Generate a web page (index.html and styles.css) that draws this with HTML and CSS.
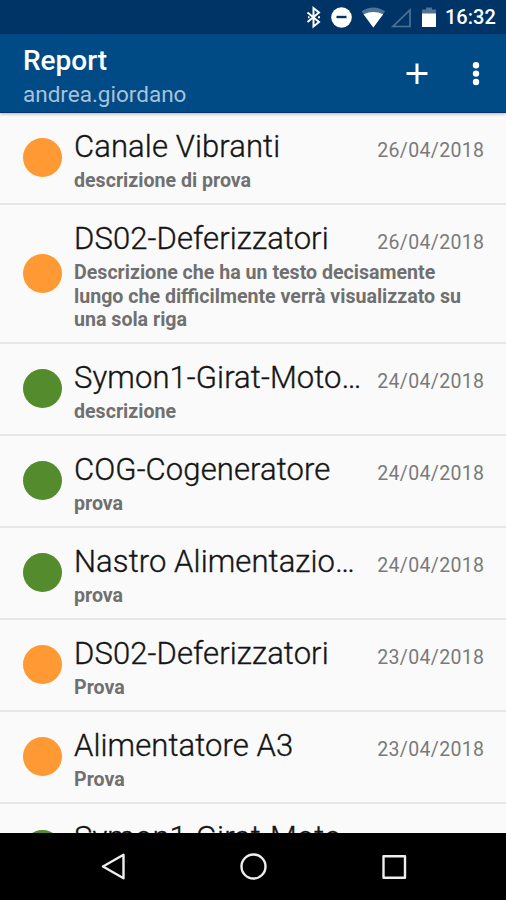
FILE: index.html
```html
<!DOCTYPE html>
<html lang="it">
<head>
<meta charset="utf-8">
<title>Report</title>
<link rel="stylesheet" href="styles.css">
</head>
<body>
<div class="screen">
  <div class="status">
    <svg class="status-icons" width="150" height="34" viewBox="290 0 150 34">
      <path d="M307.500 12.500l11.500 9.500-5.500 4.500V8l5.500 4.500-11.500 9.500" fill="none" stroke="#fff" stroke-width="2"/>
      <path d="M308 17.300h1.500M318 17.300h2" stroke="#fff" stroke-width="2"/>
      <circle cx="341.500" cy="17.500" r="10.300" fill="#fff"/>
      <path d="M336.500 17h10" stroke="#003366" stroke-width="2.400"/>
      <path d="M361.500 11.300Q373.300 3.500 385.200 11.300L373.300 27.500z" fill="#4f7397"/>
      <path d="M363.500 14.300Q373.300 9.500 383.200 14.300L373.300 27.500z" fill="#fff"/>
      <path d="M393 26.500h17V10z" fill="none" stroke="#4f7397" stroke-width="1.700"/>
      <path d="M422 9.500h4V7.500h6v2h4v5h-14z" fill="#4f7397"/>
      <path d="M422 13.500h14V27h-14z" fill="#fff"/>
    </svg>
    <span class="clock">16:32</span>
  </div>
  <header class="bar">
    <div class="heading">
      <h1>Report</h1>
      <p>andrea.giordano</p>
    </div>
    <svg class="actions" width="106" height="78" viewBox="400 34 106 78">
      <path d="M406.500 73.500h21M417 63.500v20.500" stroke="#fff" stroke-width="3"/>
      <g fill="#fff"><circle cx="476" cy="65.300" r="3.200"/><circle cx="476" cy="73.600" r="3.200"/><circle cx="476" cy="82" r="3.200"/></g>
    </svg>
  </header>
  <main class="list">
    <article class="row"><i class="dot orange"></i><div class="body"><div class="line"><h2>Canale Vibranti</h2><time>26/04/2018</time></div><p>descrizione di prova</p></div></article>
    <article class="row"><i class="dot orange"></i><div class="body"><div class="line"><h2>DS02-Deferizzatori</h2><time>26/04/2018</time></div><p>Descrizione che ha un testo decisamente lungo che difficilmente verrà visualizzato su una sola riga</p></div></article>
    <article class="row"><i class="dot green"></i><div class="body"><div class="line"><h2>Symon1-Girat-Moto…</h2><time>24/04/2018</time></div><p>descrizione</p></div></article>
    <article class="row"><i class="dot green"></i><div class="body"><div class="line"><h2>COG-Cogeneratore</h2><time>24/04/2018</time></div><p>prova</p></div></article>
    <article class="row"><i class="dot green"></i><div class="body"><div class="line"><h2>Nastro Alimentazio…</h2><time>24/04/2018</time></div><p>prova</p></div></article>
    <article class="row"><i class="dot orange"></i><div class="body"><div class="line"><h2>DS02-Deferizzatori</h2><time>23/04/2018</time></div><p>Prova</p></div></article>
    <article class="row"><i class="dot orange"></i><div class="body"><div class="line"><h2>Alimentatore A3</h2><time>23/04/2018</time></div><p>Prova</p></div></article>
    <article class="row"><i class="dot green"></i><div class="body"><div class="line"><h2>Symon1-Girat-Moto</h2></div><p>&nbsp;</p></div></article>
  </main>
  <nav class="nav">
    <svg width="506" height="67" viewBox="0 833 506 67" fill="none" stroke="#eee" stroke-width="2.400" stroke-linejoin="round">
      <path d="M103 866.500L123.500 854.800V878.200z"/>
      <circle cx="253.500" cy="866.500" r="12"/>
      <rect x="383.500" y="856.300" width="21.500" height="21.500"/>
    </svg>
  </nav>
</div>
</body>
</html>
```
FILE: styles.css
```css
* { box-sizing: border-box; margin: 0; padding: 0; }
body { font-family: Roboto, "Liberation Sans", sans-serif; background: #fafafa; }
.screen { width: 506px; height: 900px; display: flex; flex-direction: column; overflow: hidden; }
.status { flex: none; height: 34px; background: #003366; display: flex; align-items: center; justify-content: flex-end; padding-right: 11px; }
.status-icons { display: block; flex: none; margin-right: 5px; }
.clock { width: 50px; color: #fff; font-size: 20px; font-weight: 500; line-height: 37px; white-space: nowrap; }
.bar { flex: none; height: 79px; background: #004b85; border-bottom: 1px solid #00376b; display: flex; justify-content: space-between; box-shadow: 0 1px 3px rgba(0,0,0,.3); z-index: 1; }
.heading { padding: 9px 0 0 23px; }
h1 { font-size: 28px; font-weight: 500; line-height: 35px; color: #fff; }
.heading p { font-size: 22.500px; line-height: 33px; color: #a9c1d8; }
.actions { display: block; }
.list { flex: 1; min-height: 0; overflow: hidden; background: #fafafa; padding-top: .4px; }
.row { display: flex; align-items: center; padding: 12px 22px 13px 23px; border-bottom: 2px solid #e6e6e6; }
.dot { flex: none; width: 39px; height: 39px; border-radius: 50%; margin-right: 12px; }
.orange { background: #ff9933; }
.green { background: #548b2d; }
.body { flex: 1; min-width: 0; padding-top: 2px; margin-bottom: -2px; }
.line { display: flex; justify-content: space-between; align-items: baseline; height: 41.900px; }
h2 { width: 290px; font-size: 31px; font-weight: 300; letter-spacing: .1px; line-height: 40px; color: #151515; -webkit-text-stroke: .35px #151515; white-space: nowrap; }
time { margin-left: -8px; font-size: 19.500px; font-weight: 400; letter-spacing: .35px; margin-right: -.4px; color: #7a7a7a; white-space: nowrap; }
.row p { font-size: 19.600px; font-weight: 700; line-height: 23.200px; color: #707070; }
.nav { flex: none; height: 67px; background: #000; }
.nav svg { display: block; }
```
